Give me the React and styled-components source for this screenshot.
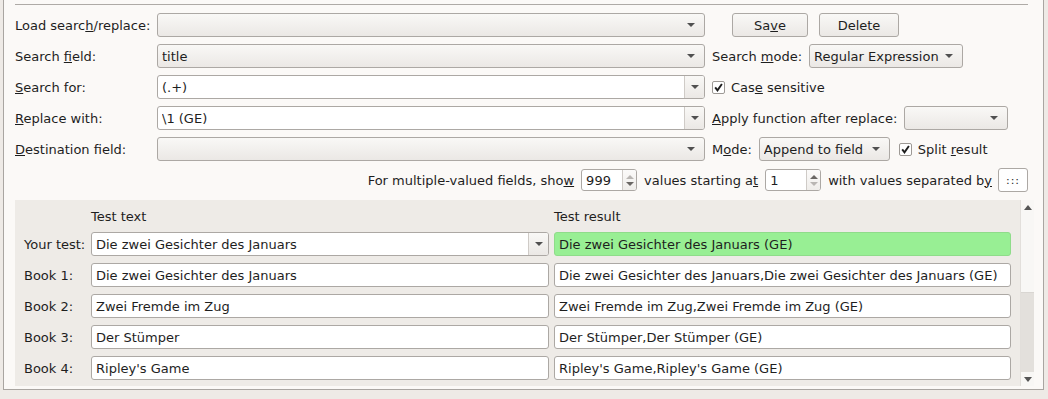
import React from 'react'
import styled, {createGlobalStyle} from 'styled-components'

const Global = createGlobalStyle`
    body {
        margin: 0;
        background: #eeeae6;
        font-family: "DejaVu Sans", Verdana, sans-serif;
        font-size: 13px;
        color: #1e1e1e;
    }
`

const Frame = styled.div`
    box-sizing: border-box;
    margin-left: 3px;
    width: 1041px;
    height: 390px;
    border: 1px solid #a9a5a1;
    border-top: none;
    background: #fbf9f7;
    padding: 4px 15px 0 11px;
`
const Separator = styled.div`
    height: 1px;
    background: #aeaaa6;
    margin-bottom: 8px;
`
const Form = styled.div`
    display: flex;
    flex-direction: column;
    gap: 7px;
`
const Row = styled.div`
    display: flex;
    align-items: center;
    gap: 7px;
    height: 24px;
    justify-content: ${p => p.$right ? 'flex-end' : 'flex-start'};
`
const Label = styled.span`
    width: ${p => p.$w ? p.$w + 'px' : 'auto'};
    flex-shrink: 0;
    white-space: nowrap;
`
const Combo = styled.div`
    box-sizing: border-box;
    display: flex;
    align-items: center;
    width: ${p => p.$w}px;
    height: 24px;
    margin-left: ${p => p.$ml || 0}px;
    border: 1px solid #aca8a4;
    border-radius: 3px;
    background: linear-gradient(#f9f8f6, #ebe8e5);
    padding: 0 9px 0 4px;
    flex-shrink: 0;
`
const Edit = styled.div`
    box-sizing: border-box;
    display: flex;
    align-items: center;
    width: ${p => p.$w ? p.$w + 'px' : 'auto'};
    height: ${p => p.$h || 24}px;
    border: 1px solid ${p => p.$green ? '#8fdc8a' : '#aca8a4'};
    border-radius: 3px;
    background: ${p => p.$green ? '#98ef94' : '#ffffff'};
    padding-left: 4px;
    overflow: hidden;
    flex-shrink: 0;
`
const Value = styled.span`
    flex: 1;
    white-space: nowrap;
    overflow: hidden;
`
const Arrow = styled.span`
    width: 0;
    height: 0;
    border-left: 4px solid transparent;
    border-right: 4px solid transparent;
    border-top: 4px solid #505050;
`
const DropButton = styled.div`
    align-self: stretch;
    width: 19px;
    display: flex;
    align-items: center;
    justify-content: center;
    border-left: 1px solid #cfcbc7;
    background: linear-gradient(#f9f8f6, #ebe8e5);
`
const SpinButtons = styled.div`
    align-self: stretch;
    width: 13px;
    display: flex;
    flex-direction: column;
    align-items: center;
    justify-content: center;
    gap: 3px;
    border-left: 1px solid #cfcbc7;
    background: linear-gradient(#fbfaf9, #efedea);
`
const SpinArrow = styled.span`
    width: 0;
    height: 0;
    border-left: 4px solid transparent;
    border-right: 4px solid transparent;
    ${p => p.$up ? 'border-bottom' : 'border-top'}: 4px solid ${p => p.$dim ? '#b9b6b3' : '#6a6764'};
`
const Button = styled.div`
    box-sizing: border-box;
    width: ${p => p.$w}px;
    height: 24px;
    margin-left: ${p => p.$ml || 0}px;
    display: flex;
    align-items: center;
    justify-content: center;
    border: 1px solid #aca8a4;
    border-radius: 3px;
    background: linear-gradient(#f9f8f6, #ebe8e5);
`
const Check = styled.label`
    display: flex;
    align-items: center;
    gap: 6px;
    margin-left: ${p => p.$ml || 0}px;
    white-space: nowrap;
`
const Box = styled.span`
    box-sizing: border-box;
    width: 13px;
    height: 13px;
    border: 1px solid #9d9995;
    border-radius: 2px;
    background: #fff;
    display: flex;
    align-items: center;
    justify-content: center;
`
const SepBox = styled.div`
    box-sizing: border-box;
    width: 30px;
    height: 24px;
    margin-left: -1px;
    border: 1px solid #aca8a4;
    border-radius: 3px;
    background: #fff;
    display: flex;
    align-items: center;
    justify-content: center;
    font-size: 11px;
    letter-spacing: 1px;
`
const Panel = styled.div`
    display: flex;
    width: 1019px;
    height: 186px;
    margin-top: 1px;
    background: #eeebe7;
`
const Grid = styled.div`
    flex: 1;
    box-sizing: border-box;
    padding: 8px 9px 6px 9px;
    display: grid;
    grid-template-columns: 62px 458px 457px;
    grid-auto-rows: 24px;
    grid-template-rows: 17px;
    column-gap: 5px;
    row-gap: 7px;
    align-items: center;
`
const Head = styled.span`
    grid-column: ${p => p.$col};
    line-height: 17px;
`
const RowLabel = styled.span`
    white-space: nowrap;
`
const ScrollBar = styled.div`
    width: 14px;
    display: flex;
    flex-direction: column;
    border-left: 1px solid #e2dfdb;
    box-sizing: border-box;
`
const ScrollEnd = styled.div`
    height: 14px;
    display: flex;
    align-items: center;
    justify-content: center;
    background: #f8f7f5;
`
const Handle = styled.div`
    height: 78px;
    background: #f8f7f5;
    border-bottom: 1px solid #d9d6d2;
`
const Track = styled.div`
    flex: 1;
    background: #e3e0dc;
`
const ScrollArrow = styled.span`
    width: 0;
    height: 0;
    border-left: 4px solid transparent;
    border-right: 4px solid transparent;
    ${p => p.$up ? 'border-bottom' : 'border-top'}: 5px solid #555;
`

function Tick() {
    return (
        <svg width="9" height="9" viewBox="0 0 9 9">
            <path d="M1.2 4.4 L3.5 7.4 L7.9 1.0" fill="none" stroke="#1e1e1e" strokeWidth="1.9" />
        </svg>
    )
}

function Spin({value, upDim, downDim}) {
    return (
        <Edit $w={56} $h={22}>
            <Value>{value}</Value>
            <SpinButtons>
                <SpinArrow $up $dim={upDim} />
                <SpinArrow $dim={downDim} />
            </SpinButtons>
        </Edit>
    )
}

const books = [
    ['Book 1:', 'Die zwei Gesichter des Januars', 'Die zwei Gesichter des Januars,Die zwei Gesichter des Januars (GE)'],
    ['Book 2:', 'Zwei Fremde im Zug', 'Zwei Fremde im Zug,Zwei Fremde im Zug (GE)'],
    ['Book 3:', 'Der Stümper', 'Der Stümper,Der Stümper (GE)'],
    ['Book 4:', "Ripley's Game", "Ripley's Game,Ripley's Game (GE)"],
]

export default function App() {
    return (
        <>
            <Global />
            <Frame>
                <Separator />
                <Form>
                    <Row>
                        <Label $w={135}>Load searc<u>h</u>/replace:</Label>
                        <Combo $w={548}><Value /><Arrow /></Combo>
                        <Button $w={76} $ml={20}>Sa<u>v</u>e</Button>
                        <Button $w={80} $ml={4}>Delete</Button>
                    </Row>
                    <Row>
                        <Label $w={135}>Search <u>f</u>ield:</Label>
                        <Combo $w={548}><Value>title</Value><Arrow /></Combo>
                        <Label>Search <u>m</u>ode:</Label>
                        <Combo $w={154}><Value>Regular Expression</Value><Arrow /></Combo>
                    </Row>
                    <Row>
                        <Label $w={135}><u>S</u>earch for:</Label>
                        <Edit $w={548}><Value>(.+)</Value><DropButton><Arrow /></DropButton></Edit>
                        <Check><Box><Tick /></Box><span>Cas<u>e</u> sensitive</span></Check>
                    </Row>
                    <Row>
                        <Label $w={135}><u>R</u>eplace with:</Label>
                        <Edit $w={548}><Value>\1 (GE)</Value><DropButton><Arrow /></DropButton></Edit>
                        <Label><u>A</u>pply function after replace:</Label>
                        <Combo $w={104}><Value /><Arrow /></Combo>
                    </Row>
                    <Row>
                        <Label $w={135}><u>D</u>estination field:</Label>
                        <Combo $w={548}><Value /><Arrow /></Combo>
                        <Label>M<u>o</u>de:</Label>
                        <Combo $w={131}><Value>Append to field</Value><Arrow /></Combo>
                        <Check $ml={2}><Box><Tick /></Box><span>Split <u>r</u>esult</span></Check>
                    </Row>
                    <Row $right>
                        <Label>For multiple-valued fields, sho<u>w</u></Label>
                        <Spin value="999" upDim />
                        <Label>values starting a<u>t</u></Label>
                        <Spin value="1" downDim />
                        <Label>with values separated b<u>y</u></Label>
                        <SepBox>:::</SepBox>
                    </Row>
                    <Panel>
                        <Grid>
                            <Head $col={2}>Test text</Head>
                            <Head $col={3}>Test result</Head>
                            <RowLabel>Your test:</RowLabel>
                            <Edit><Value>Die zwei Gesichter des Januars</Value><DropButton><Arrow /></DropButton></Edit>
                            <Edit $green><Value>Die zwei Gesichter des Januars (GE)</Value></Edit>
                            {books.map((b, idx) => (
                                <React.Fragment key={idx}>
                                    <RowLabel>{b[0]}</RowLabel>
                                    <Edit><Value>{b[1]}</Value></Edit>
                                    <Edit><Value>{b[2]}</Value></Edit>
                                </React.Fragment>
                            ))}
                        </Grid>
                        <ScrollBar>
                            <ScrollEnd><ScrollArrow $up /></ScrollEnd>
                            <Handle />
                            <Track />
                            <ScrollEnd><ScrollArrow /></ScrollEnd>
                        </ScrollBar>
                    </Panel>
                </Form>
            </Frame>
        </>
    )
}
